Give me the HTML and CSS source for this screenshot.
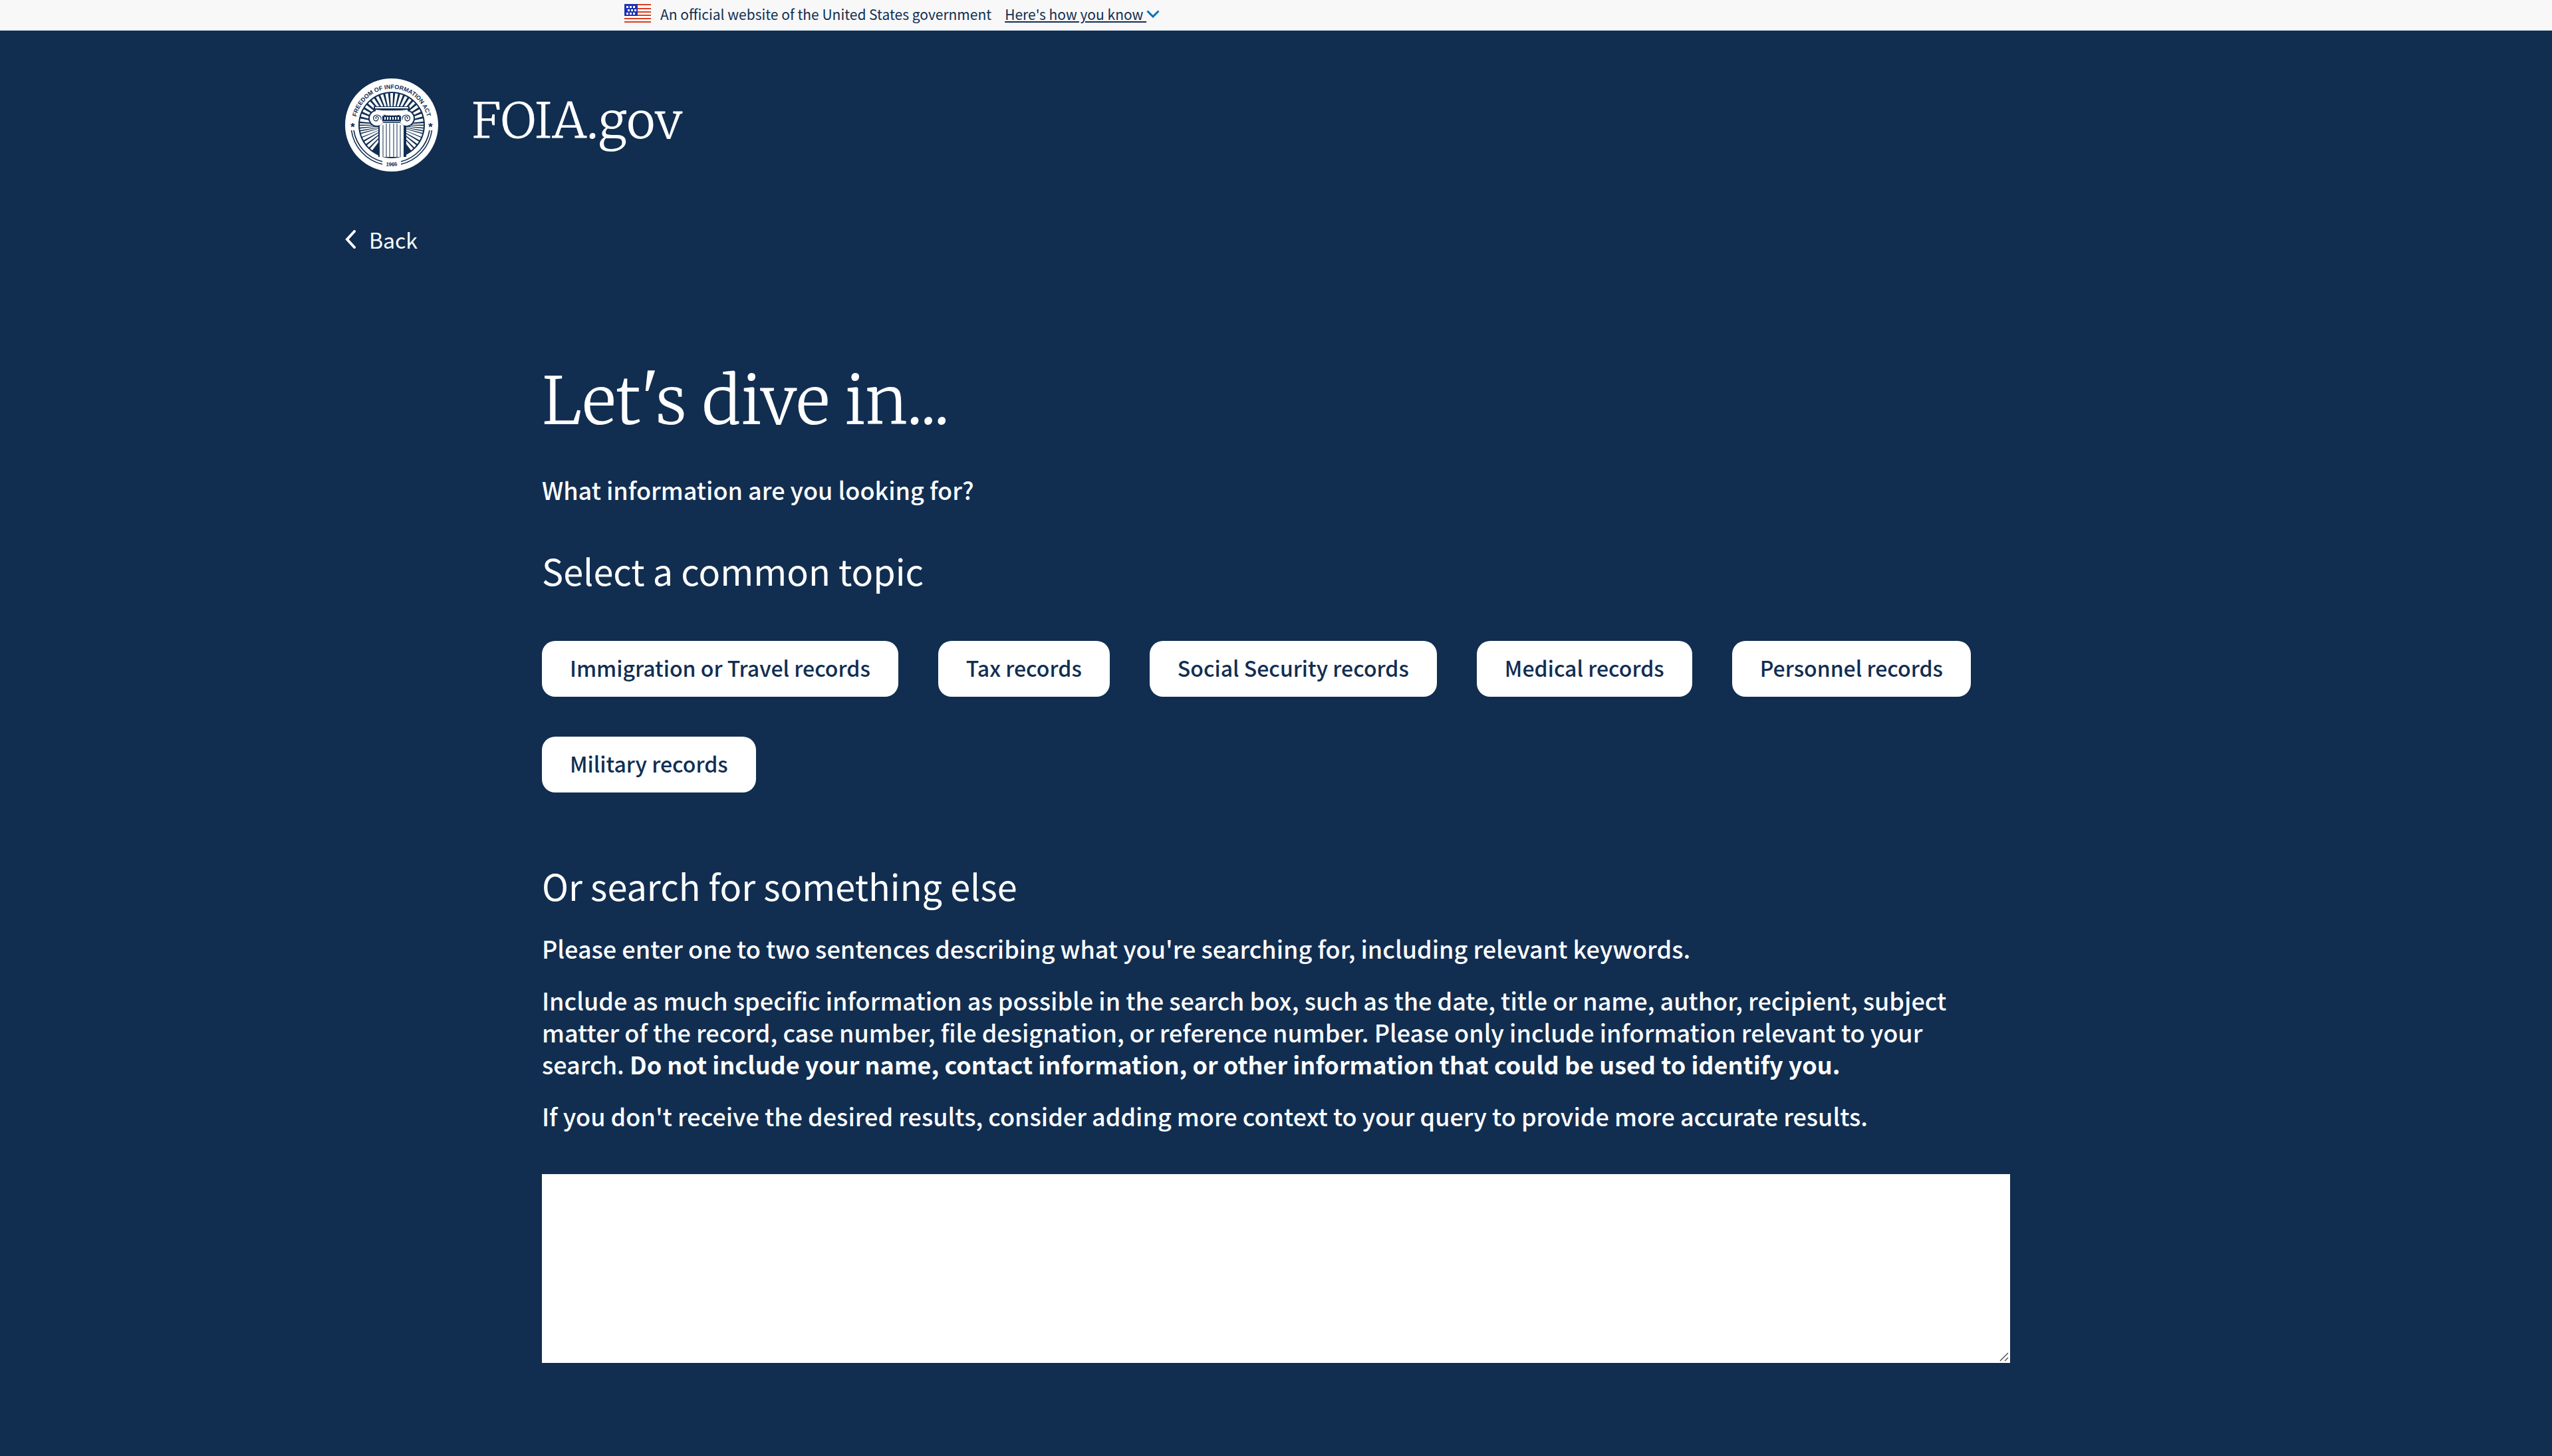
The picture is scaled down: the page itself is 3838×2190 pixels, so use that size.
FILE: index.html
```html
<!DOCTYPE html>
<html lang="en">
<head>
    <meta charset="UTF-8">
    <meta name="viewport" content="width=device-width, initial-scale=1.0">
    <title>FOIA.gov - Search</title>
    <link rel="stylesheet" href="styles.css">
</head>
<body>

<!-- Government banner -->
<div class="banner">
    <div class="banner-inner">
        <svg class="flag" viewBox="0 0 40 28" aria-hidden="true">
            <rect width="40" height="28" fill="#fff"/>
            <path d="M0 1h40M0 7h40M0 12h40M0 17h40M0 22h40M0 27h40" stroke="#db3e1f" stroke-width="2"/>
            <rect width="20" height="18" fill="#1e33b1"/>
            <path d="M3 4.500h3M8 4.500h3M13 4.500h3M5 9.500h3M10 9.500h3M15 9.500h3M3 14.500h3M8 14.500h3M13 14.500h3" stroke="#fff" stroke-width="3"/>
        </svg>
        <span>An official website of the United States government</span>
        <button class="banner-button" type="button"><span class="banner-link">Here's how you know&nbsp;</span><svg class="banner-arrow" viewBox="0 0 20 12" aria-hidden="true"><path d="M1.500 1.500l8.500 8.500 8.500-8.500" fill="none" stroke="#0071bc" stroke-width="3"/></svg></button>
    </div>
</div>

<!-- Site header -->
<header class="header">
    <a class="brand" href="#">
        <svg class="seal" id="seal" viewBox="0 0 140 140" role="img" aria-label="Freedom of Information Act seal">
            <defs>
                <path id="arc-top" d="M15.500 70a54.500 54.500 0 0 1 109 0"/>
                <path id="arc-bottom" d="M8 70a62 62 0 0 0 124 0"/>
                <clipPath id="disc"><circle cx="70" cy="70" r="48"/></clipPath>
            </defs>
            <circle cx="70" cy="70" r="70" fill="#fff"/>
            <circle cx="70" cy="70" r="50" fill="#112e51"/>
            <g id="rays" clip-path="url(#disc)" fill="#fff"></g>
            <text class="seal-text"><textPath href="#arc-top" startOffset="50%" text-anchor="middle">FREEDOM OF INFORMATION ACT</textPath></text>
            <text class="seal-year"><textPath href="#arc-bottom" startOffset="50%" text-anchor="middle">1966</textPath></text>
            <!-- Stars -->
            <path d="M11.500 67l.8 2.200h2.200l-1.800 1.400.7 2.200-1.900-1.300-1.900 1.300.7-2.200-1.800-1.400h2.200zM128.500 67l.8 2.200h2.200l-1.800 1.400.7 2.200-1.900-1.300-1.900 1.300.7-2.200-1.800-1.400h2.200z" fill="#112e51" stroke="#112e51"/>
            <!-- Double rules round the bottom -->
            <path d="M9.500 78a61 61 0 0 0 46.500 51M13 78a58 58 0 0 0 43 47M130.500 78a61 61 0 0 1-46.500 51M127 78a58 58 0 0 1-43 47" fill="none" stroke="#112e51" stroke-width="1.600"/>
            <!-- Column -->
            <g fill="#112e51">
                <path d="M43 42h54v6H43z"/>
                <circle cx="48" cy="60" r="13"/>
                <circle cx="92" cy="60" r="13"/>
                <path d="M48 56h44v62H50V66z"/>
            </g>
            <path d="M45 44h50" stroke="#fff" stroke-width="2"/>
            <g fill="#fff">
                <circle cx="48" cy="60" r="11"/>
                <circle cx="92" cy="60" r="11"/>
                <path d="M46 47c16 2 32 2 48 0v6c-12 3-36 3-48 0z"/>
            </g>
            <path d="M56 56c9 2 19 2 28 0v9H56z" fill="#112e51"/>
            <path d="M47 61a2 2 0 1 1 3-1c0 3-3 5-6 3-3-3-1-8 4-8 4 0 7 3 6 7M93 61a2 2 0 1 0-3-1c0 3 3 5 6 3 3-3 1-8-4-8-4 0-7 3-6 7" fill="none" stroke="#112e51" stroke-width="1.200"/>
            <path d="M60 58v4M64 58v4M68 58v4M72 58v4M76 58v4M80 58v4" stroke="#fff" stroke-width="2"/>
            <path d="M57 65h26" stroke="#fff" stroke-width="1"/>
            <path d="M52 71l5-4h26l5 4v47H52z" fill="#fff"/>
            <path d="M57 70v48M62 68v50M67 68v50M73 68v50M78 68v50M83 70v48" stroke="#112e51" stroke-width="1"/>
        </svg>
        <span class="site-name">FOIA.gov</span>
    </a>
    <a class="back" href="#">
        <svg class="back-arrow" viewBox="0 0 16 28" aria-hidden="true"><path d="M14 2L3 14l11 12" fill="none" stroke="#fff" stroke-width="4" stroke-linecap="round"/></svg>
        <span>Back</span>
    </a>
</header>

<!-- Search wizard -->
<main class="main">
    <h1>Let's dive in...</h1>
    <p class="question">What information are you looking for?</p>

    <h2>Select a common topic</h2>
    <div class="topics">
        <button type="button">Immigration or Travel records</button>
        <button type="button">Tax records</button>
        <button type="button">Social Security records</button>
        <button type="button">Medical records</button>
        <button type="button">Personnel records</button>
        <button type="button">Military records</button>
    </div>

    <h2><label for="query">Or search for something else</label></h2>
    <div class="help">
        <p>Please enter one to two sentences describing what you're searching for, including relevant keywords.</p>
        <p>Include as much specific information as possible in the search box, such as the date, title or name, author, recipient, subject matter of the record, case number, file designation, or reference number. Please only include information relevant to your search. <strong>Do not include your name, contact information, or other information that could be used to identify you.</strong></p>
        <p>If you don't receive the desired results, consider adding more context to your query to provide more accurate results.</p>
    </div>
    <div class="query-box">
        <textarea id="query"></textarea>
        <svg class="grip" viewBox="0 0 14 14" aria-hidden="true"><path d="M1 13L13 1M8 13l5-5" stroke="#555" stroke-width="1.500"/></svg>
    </div>
</main>

<script>
    // Sun rays behind the column of the seal, closer together at the sides
    let rays = document.getElementById("rays");
    let angles = [0, 9, 18, 27, 36, 45, 54, 63, 72, 81, 88, 93, 98, 103, 109, 116, 124, 132, 140];

    function addRay(angle, width) {
        let ray = document.createElementNS("http://www.w3.org/2000/svg", "path");
        ray.setAttribute("d", "M70 70L" + (70 - width) + " 20h" + (width * 2) + "z");
        ray.setAttribute("transform", "rotate(" + angle + " 70 70)");
        rays.appendChild(ray);
    }

    angles.forEach(function(angle) {
        let width = angle > 84 && angle < 106 ? 1.2 : 2.3;
        addRay(angle, width);
        if (angle > 0) addRay(-angle, width);
    });
</script>

</body>
</html>
```
FILE: styles.css
```css
/* General */
* {
    box-sizing: border-box;
}

body {
    margin: 0;
    min-height: 100vh;
    background-color: #112e51;
    color: #fff;
    font-family: "Source Sans Pro", "Noto Sans CJK SC", sans-serif;
    font-size: 36px;
    line-height: 48px;
}

a {
    color: inherit;
    text-decoration: none;
}

button {
    font-family: inherit;
    border: none;
    cursor: pointer;
}

/* Government banner */
.banner {
    padding-bottom: 2px;
    background-color: #f8f8f8;
    border-bottom: 2px solid #e7f2f8;
    color: #112e51;
    font-size: 21px;
    line-height: 42px;
}

.banner-inner {
    display: flex;
    align-items: center;
    max-width: 1960px;
    margin: 0 auto;
}

.flag {
    width: 40px;
    height: 28px;
    margin: 0 14px 2px 0;
}

.banner-button {
    display: flex;
    align-items: center;
    margin-left: 20px;
    padding: 0;
    background: none;
    color: inherit;
    font-size: 21px;
    line-height: 42px;
}

.banner-link {
    text-decoration: underline;
}

.banner-arrow {
    width: 20px;
    height: 12px;
}

/* Header */
.header {
    max-width: 2800px;
    margin: 0 auto;
    padding-top: 72px;
}

.brand {
    display: flex;
    align-items: center;
    width: fit-content;
}

.seal {
    width: 140px;
    height: 140px;
}

.seal-text,
.seal-year {
    fill: #112e51;
    font-family: "Liberation Sans", sans-serif;
    font-weight: bold;
    font-size: 9px;
}

.seal-year {
    font-size: 8px;
}

.site-name,
h1 {
    font-family: Merriweather, "Liberation Serif", serif;
    font-weight: 300;
}

.site-name {
    margin-left: 50px;
    padding-bottom: 12px;
    font-size: 74px;
    line-height: 96px;
}

.back {
    display: flex;
    align-items: center;
    width: fit-content;
    margin-top: 78px;
    font-size: 32px;
}

.back-arrow {
    width: 16px;
    height: 28px;
    margin-right: 20px;
}

/* Wizard content */
.main {
    max-width: 2208px;
    margin: 0 auto;
    padding: 170px 0 140px;
}

h1 {
    margin: 0;
    font-size: 98px;
    line-height: 100px;
}

h2 {
    margin: 0;
    font-size: 54px;
    font-weight: 400;
    line-height: 72px;
}

.question {
    margin: 58px 0 62px;
    font-weight: 500;
}

.topics {
    display: flex;
    flex-wrap: wrap;
    gap: 60px;
    margin: 70px 0 104px;
}

.topics button {
    height: 84px;
    padding: 0 42px 4px;
    border-radius: 20px;
    background-color: #fff;
    color: #112e51;
    font-size: 32px;
    font-weight: 500;
    line-height: 80px;
}

.help {
    margin-top: 34px;
    font-weight: 500;
}

.help p {
    margin: 0 0 30px;
}

.help strong {
    font-weight: 700;
}

.query-box {
    position: relative;
    margin-top: 64px;
}

textarea {
    display: block;
    width: 100%;
    height: 284px;
    padding: 16px;
    border: none;
    background-color: #fff;
    color: #112e51;
    font: inherit;
    resize: none;
}

.grip {
    position: absolute;
    right: 2px;
    bottom: 2px;
    width: 14px;
    height: 14px;
}
```
